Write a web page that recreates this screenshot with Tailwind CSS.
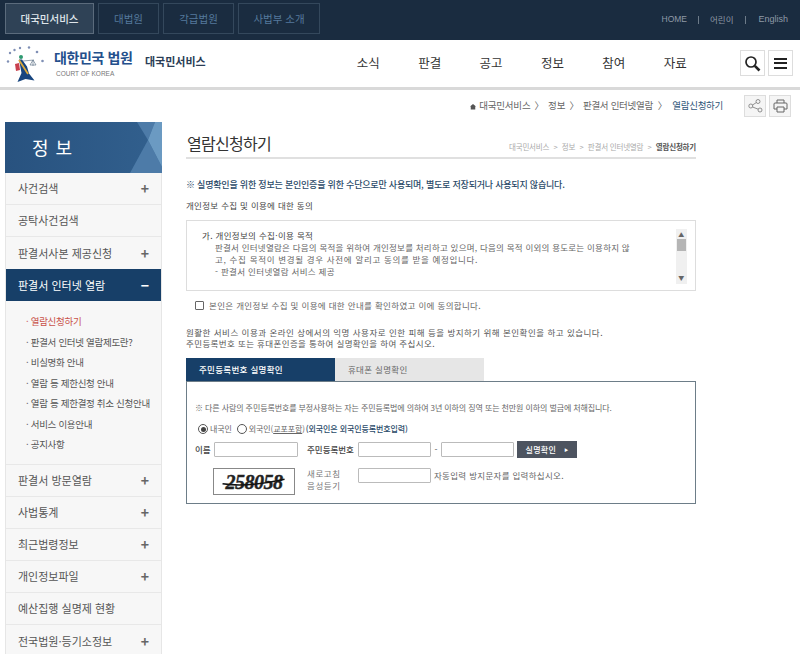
<!DOCTYPE html>
<html lang="ko">
<head>
<meta charset="UTF-8">
<title>열람신청하기 - 대국민서비스</title>
<script src="https://cdn.jsdelivr.net/npm/@tailwindcss/browser@4"></script>
</head>
<body class="w-[800px] h-[654px] overflow-hidden bg-white text-[#555] font-['Noto_Sans_CJK_KR','Noto_Sans',sans-serif]">

<!-- Top bar -->
<div class="h-[40px] bg-[#1a2c40] flex justify-between items-start pl-[5px] pr-[12px] pt-[3px]">
  <div class="flex gap-[4px] text-[10.5px]">
    <a class="w-[89px] h-[31px] flex items-center justify-center border border-[#5b6b7c] bg-[#2f4256] text-[#dfe5ea] font-medium">대국민서비스</a>
    <a class="w-[61px] h-[31px] flex items-center justify-center border border-[#34485c] text-[#55799c]">대법원</a>
    <a class="w-[71px] h-[31px] flex items-center justify-center border border-[#34485c] text-[#55799c]">각급법원</a>
    <a class="w-[82px] h-[31px] flex items-center justify-center border border-[#34485c] text-[#55799c]">사법부 소개</a>
  </div>
  <div class="flex items-center h-[31px] mt-[1px] text-[8.5px] text-[#8f9aa6]">
    <span class="font-['Liberation_Sans']">HOME</span>
    <span class="mx-[11px] h-[8px] w-px bg-[#6d7b89]"></span>
    <span>어린이</span>
    <span class="mx-[12px] h-[8px] w-px bg-[#6d7b89]"></span>
    <span class="font-['Liberation_Sans'] text-[9px]">English</span>
  </div>
</div>

<!-- Header -->
<div class="h-[50px] border-b-[3px] border-[#d9d9d9] flex items-center pl-[6px] pr-[7px]">
  <svg class="w-[40px] h-[38px]" viewBox="6 44 40 38">
    <g fill="#7f8fb5">
      <circle cx="10" cy="52" r="1.2"/><circle cx="14.5" cy="49" r="1.2"/><circle cx="20" cy="47" r="1.2"/><circle cx="29" cy="46.5" r="1.2"/><circle cx="37" cy="51" r="1.3"/><circle cx="42.500" cy="60" r="1.3"/><circle cx="8" cy="60.500" r="1.2"/>
    </g>
    <circle cx="21" cy="56" r="2" fill="#2e9a70"/>
    <path d="M19 58.500l3 0 5 7 2 7 5.500 7-9-1.500-8 3 4-9z" fill="#17457f"/>
    <path d="M15 63l4-1 1 7-4 1z" fill="#c9404d"/>
    <path d="M19 59l9 14" stroke="#dca93a" stroke-width="1.800"/>
    <path d="M23 60l11-1M33 59l-3 5h6zM33 59v6" stroke="#66788c" stroke-width=".7" fill="none"/>
  </svg>
  <div class="ml-[8px] w-[91px] flex flex-col">
    <span class="text-[14px] leading-[18px] font-bold text-[#24508c] whitespace-nowrap tracking-[-0.4px]">대한민국 법원</span>
    <span class="text-[6.5px] leading-[10px] mt-[3px] ml-[2px] text-[#777] font-['Liberation_Sans'] whitespace-nowrap">COURT OF KOREA</span>
  </div>
  <span class="mb-[5px] text-[11px] font-bold text-[#2b3d55] whitespace-nowrap">대국민서비스</span>
  <nav class="ml-[151px] mb-[1px] flex gap-[39.4px] text-[12.5px] text-[#333] whitespace-nowrap">
    <a class="w-[22px]">소식</a><a class="w-[22px]">판결</a><a class="w-[22px]">공고</a><a class="w-[22px]">정보</a><a class="w-[22px]">참여</a><a class="w-[22px]">자료</a>
  </nav>
  <div class="ml-auto flex gap-[3px] mb-[1px]">
    <button class="w-[25px] h-[26px] border border-[#ddd] flex items-center justify-center">
      <svg class="w-[17px] h-[17px]" viewBox="0 0 17 17" fill="none" stroke="#222"><circle cx="7" cy="7" r="5" stroke-width="1.7"/><path d="M10.8 10.8l4.7 4.7" stroke-width="2.6"/></svg>
    </button>
    <button class="w-[25px] h-[26px] border border-[#ddd] flex flex-col gap-[2.5px] items-center justify-center">
      <span class="w-[13px] h-[2px] bg-[#222]"></span><span class="w-[13px] h-[2px] bg-[#222]"></span><span class="w-[13px] h-[2px] bg-[#222]"></span>
    </button>
  </div>
</div>

<!-- Breadcrumb -->
<div class="h-[32px] flex items-center justify-end pr-[9px] text-[9.5px] text-[#666] whitespace-nowrap">
  <svg class="w-[6px] h-[7px] mr-[3px]" viewBox="0 0 8 8"><path d="M4 .5L8 4H7v4H1V4H0z" fill="#555"/></svg>
  <span class="mb-[2px] tracking-[-0.2px]">대국민서비스</span><span class="mx-[4px] mb-[2px]">〉</span><span class="mb-[2px]">정보</span><span class="mx-[4px] mb-[2px]">〉</span><span class="tracking-[-0.3px] mb-[2px]">판결서 인터넷열람</span><span class="mx-[5px] mb-[2px]">〉</span><span class="text-[#2f5578] mb-[2px] tracking-[-0.3px]">열람신청하기</span>
  <button class="ml-[21px] w-[22px] h-[22px] border border-[#ddd] bg-[#f5f5f5] flex items-center justify-center">
    <svg class="w-[15px] h-[14px]" viewBox="0 0 15 14" fill="none" stroke="#777" stroke-width=".8"><circle cx="2.8" cy="7" r="2"/><circle cx="10" cy="2.5" r="2"/><circle cx="12" cy="11" r="2"/><path d="M4.5 6l3.8-2.4M4.6 8l5.6 2.2"/></svg>
  </button>
  <button class="ml-[3px] w-[22px] h-[22px] border border-[#ddd] bg-[#f5f5f5] flex items-center justify-center">
    <svg class="w-[15px] h-[14px]" viewBox="0 0 15 14" fill="none" stroke="#666"><path d="M4 4V1h7v3M1 10V5a1 1 0 011-1h11a1 1 0 011 1v5h-3M4 10H1"/><path d="M4 8h7v5H4z"/></svg>
  </button>
</div>

<div class="flex items-start pl-[5px]">
  <!-- Sidebar -->
  <aside class="w-[157px] shrink-0 border-x border-[#e6e6e6] bg-[#f7f7f7] text-[11px] text-[#555]">
    <div class="relative h-[51px] -mx-px overflow-hidden bg-gradient-to-r from-[#28527f] to-[#32608e] flex items-center pl-[27px] text-[18px] text-white tracking-[1px]">
      <span>정 보</span>
      <div class="absolute right-0 top-0 h-full w-[32px] bg-[#4d7ba8] [clip-path:polygon(7px_0,25px_0,18px_18px)]"></div>
      <div class="absolute right-0 top-0 h-full w-[32px] bg-[#4d7ba8] [clip-path:polygon(18px_18px,32px_45px,32px_51px,0_51px)]"></div>
      <div class="absolute right-0 top-0 h-full w-[32px] bg-[#6b9ac2] [clip-path:polygon(25px_0,32px_0,32px_45px,18px_18px)]"></div>
    </div>
    <a class="h-[32px] flex items-center justify-between pl-[12px] pr-[12px] border-b border-[#e8e8e8]">사건검색<span class="text-[14px] font-bold text-[#666]">+</span></a>
    <a class="h-[32px] flex items-center pl-[12px] border-b border-[#e8e8e8]">공탁사건검색</a>
    <a class="h-[32px] flex items-center justify-between pl-[12px] pr-[12px]">판결서사본 제공신청<span class="text-[14px] font-bold text-[#666]">+</span></a>
    <a class="h-[32px] flex items-center justify-between pl-[12px] pr-[12px] bg-[#173f68] text-white">판결서 인터넷 열람<span class="text-[14px] font-bold">−</span></a>
    <ul class="h-[164px] pt-[10px] pl-[20px] text-[9.5px] leading-[20.5px] whitespace-nowrap tracking-[-0.3px] border-b border-[#e8e8e8]">
      <li class="text-[#c9524a]">· 열람신청하기</li>
      <li>· 판결서 인터넷 열람제도란?</li>
      <li>· 비실명화 안내</li>
      <li>· 열람 등 제한신청 안내</li>
      <li>· 열람 등 제한결정 취소 신청안내</li>
      <li>· 서비스 이용안내</li>
      <li>· 공지사항</li>
    </ul>
    <a class="h-[32px] flex items-center justify-between pl-[12px] pr-[12px] border-b border-[#e8e8e8]">판결서 방문열람<span class="text-[14px] font-bold text-[#666]">+</span></a>
    <a class="h-[32px] flex items-center justify-between pl-[12px] pr-[12px] border-b border-[#e8e8e8]">사법통계<span class="text-[14px] font-bold text-[#666]">+</span></a>
    <a class="h-[32px] flex items-center justify-between pl-[12px] pr-[12px] border-b border-[#e8e8e8]">최근법령정보<span class="text-[14px] font-bold text-[#666]">+</span></a>
    <a class="h-[32px] flex items-center justify-between pl-[12px] pr-[12px] border-b border-[#e8e8e8]">개인정보파일<span class="text-[14px] font-bold text-[#666]">+</span></a>
    <a class="h-[32px] flex items-center pl-[12px] border-b border-[#e8e8e8]">예산집행 실명제 현황</a>
    <a class="h-[32px] flex items-center justify-between pl-[12px] pr-[12px]">전국법원·등기소정보<span class="text-[14px] font-bold text-[#666]">+</span></a>
  </aside>

  <!-- Content -->
  <main class="ml-[24px] w-[510px] shrink-0 text-[9px] text-[#555]">
    <div class="h-[37px] border-b-2 border-[#e0e0e0] flex items-end justify-between pb-[3px]">
      <h1 class="text-[16px] leading-[22px] text-[#333] tracking-[-0.7px] ml-[1px]">열람신청하기</h1>
      <div class="flex text-[7.5px] leading-[14px] text-[#aaa] whitespace-nowrap gap-[4.3px] tracking-[-0.2px]">
        <span>대국민서비스</span><span>&gt;</span><span>정보</span><span>&gt;</span><span>판결서 인터넷열람</span><span>&gt;</span><span class="font-bold text-[#555]">열람신청하기</span>
      </div>
    </div>
    <p class="mt-[19px] text-[9px] leading-[14px] font-medium text-[#2a4a68] tracking-[-0.2px] whitespace-nowrap">※ 실명확인을 위한 정보는 본인인증을 위한 수단으로만 사용되며, 별도로 저장되거나 사용되지 않습니다.</p>
    <p class="mt-[6px] text-[8.5px] leading-[14px] tracking-[0.3px] text-[#444]">개인정보 수집 및 이용에 대한 동의</p>

    <div class="mt-[8px] h-[71px] border border-[#ddd] flex justify-between pl-[15px] pr-[8px] pt-[8px] pb-[6px] text-[8.5px] leading-[12px] tracking-[0.32px] text-[#666] whitespace-nowrap">
      <div>
        <p class="text-[#444]">가. 개인정보의 수집·이용 목적</p>
        <p class="pl-[13px] tracking-[0.23px]">판결서 인터넷열람은 다음의 목적을 위하여 개인정보를 처리하고 있으며, 다음의 목적 이외의 용도로는 이용하지 않</p>
        <p class="pl-[13px] tracking-[0.68px]">고, 수집 목적이 변경될 경우 사전에 알리고 동의를 받을 예정입니다.</p>
        <p class="pl-[13px]">- 판결서 인터넷열람 서비스 제공</p>
      </div>
      <div class="w-[11px] bg-[#f0f0f0] flex flex-col items-center justify-between py-[3px] text-[6px] leading-[6px] text-[#666]">
        <span>▲</span>
        <div class="w-[9px] h-[12px] bg-[#b5b5b5] mt-[1px]"></div>
        <span class="mt-auto">▼</span>
      </div>
    </div>

    <label class="mt-[8px] ml-[9px] h-[12px] flex items-center gap-[5px] text-[8.5px] tracking-[0.34px] text-[#666]">
      <span class="w-[9px] h-[9px] border border-[#666] rounded-[1px] bg-white"></span>
      본인은 개인정보 수집 및 이용에 대한 안내를 확인하였고 이에 동의합니다.
    </label>

    <div class="mt-[16px] text-[8.5px] leading-[11px] text-[#555] whitespace-nowrap">
      <p class="tracking-[0.49px]">원활한 서비스 이용과 온라인 상에서의 익명 사용자로 인한 피해 등을 방지하기 위해 본인확인을 하고 있습니다.</p>
      <p class="tracking-[0.38px]">주민등록번호 또는 휴대폰인증을 통하여 실명확인을 하여 주십시오.</p>
    </div>

    <div class="mt-[9px] flex h-[23px] text-[8.5px] tracking-[0.3px]">
      <div class="w-[149px] bg-[#173f68] text-white font-medium flex items-center pl-[13px]">주민등록번호 실명확인</div>
      <div class="w-[149px] bg-[#e6e6e6] text-[#666] flex items-center pl-[13px]">휴대폰 실명확인</div>
    </div>

    <div class="h-[123px] border border-[#6d7d88] pt-[20px]">
      <p class="ml-[8px] text-[8px] leading-[12px] tracking-[-0.1px] text-[#666] whitespace-nowrap">※ 다른 사람의 주민등록번호를 부정사용하는 자는 주민등록법에 의하여 3년 이하의 징역 또는 천만원 이하의 벌금에 처해집니다.</p>
      <div class="mt-[9px] ml-[11px] h-[12px] flex items-center text-[8px] text-[#666] whitespace-nowrap tracking-[-0.1px]">
        <span class="w-[10px] h-[10px] rounded-full border border-[#555] flex items-center justify-center"><span class="w-[5px] h-[5px] rounded-full bg-[#444]"></span></span>
        <span class="ml-[2px]">내국인</span>
        <span class="ml-[5px] w-[10px] h-[10px] rounded-full border border-[#555]"></span>
        <span class="ml-[2px]">외국인(<u>교포포함</u>)</span>
        <span class="ml-[1px] font-medium text-[#2a4a68]">(외국인은 외국인등록번호입력)</span>
      </div>
      <div class="mt-[6px] ml-[8px] flex items-center text-[8.5px] whitespace-nowrap">
        <span class="w-[19px] font-medium text-[#444]">이름</span>
        <span class="w-[84px] h-[15px] border border-[#bbb] rounded-[1px]"></span>
        <span class="ml-[9px] w-[51px] font-medium text-[#444]">주민등록번호</span>
        <span class="w-[73px] h-[15px] border border-[#bbb] rounded-[1px]"></span>
        <span class="w-[10px] text-center">-</span>
        <span class="w-[73px] h-[15px] border border-[#bbb] rounded-[1px]"></span>
        <button class="ml-[3px] w-[60px] h-[17px] bg-[#4d5460] text-white text-[8px] font-medium flex items-center justify-center gap-[8px] tracking-[0.3px]">실명확인<span class="text-[4px]">▶</span></button>
      </div>
      <div class="mt-[10px] ml-[26px] flex items-start text-[8.5px] whitespace-nowrap">
        <div class="w-[82px] h-[27px] border border-[#888] relative flex items-center justify-center">
          <span class="font-['Liberation_Serif'] font-bold italic text-[20px] leading-[24px] text-[#222] tracking-[-0.5px] [-webkit-text-stroke:0.4px_#222]">258058</span>
          <svg class="absolute inset-0 w-full h-full" viewBox="0 0 82 27" fill="none" stroke="#111" stroke-width="1.600"><path d="M7 16c20 3 45 0 67-5"/></svg>
        </div>
        <div class="ml-[12px] w-[51px] leading-[11.5px] text-[#777] tracking-[0.6px]">
          <p>새로고침</p><p>음성듣기</p>
        </div>
        <span class="w-[73px] h-[15px] border border-[#bbb] rounded-[1px]"></span>
        <span class="ml-[3px] leading-[14px] text-[#666] tracking-[0.3px]">자동입력 방지문자를 입력하십시오.</span>
      </div>
    </div>
  </main>
</div>
</body>
</html>
